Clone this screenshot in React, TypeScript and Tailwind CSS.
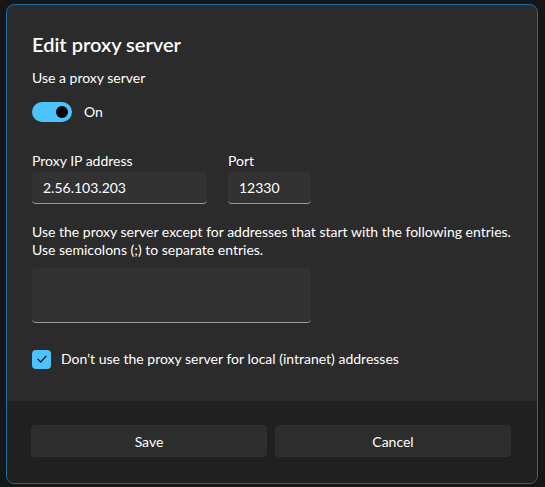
import React from "react";

export default function App() {
  return (
    <div
      className="w-[545px] h-[487px] bg-[#161616] overflow-hidden pt-[4px] pl-[6px]"
      style={{ fontFamily: 'Lato, "Noto Sans", sans-serif' }}
    >
      <div className="w-[532px] h-[480px] rounded-[8px] border border-[#1c6aa6] bg-[#2b2b2b] overflow-hidden flex flex-col">
        <div className="flex-1 pl-[25px] pt-[26px]">
          <div className="text-[20px] leading-[26px] font-semibold text-white">Edit proxy server</div>
          <div className="mt-[11px] text-[14px] leading-[20px] text-white">Use a proxy server</div>
          <div className="mt-[14px] flex items-center gap-[12px]">
            <div className="w-[40px] h-[20px] rounded-full bg-[#4cc2ff] flex items-center justify-end pr-[4px]">
              <div className="w-[12px] h-[12px] rounded-full bg-black" />
            </div>
            <span className="text-[14px] leading-[20px] text-white">On</span>
          </div>
          <div className="mt-[29px] flex gap-[21px]">
            <div className="flex flex-col">
              <span className="text-[14px] leading-[20px] text-white">Proxy IP address</span>
              <div className="mt-[1px] w-[175px] h-[32px] rounded-[4px] bg-[#323232] border-b border-[#9a9a9a] flex items-center pl-[11px] text-[14px] text-white">
                2.56.103.203
              </div>
            </div>
            <div className="flex flex-col">
              <span className="text-[14px] leading-[20px] text-white">Port</span>
              <div className="mt-[1px] w-[83px] h-[32px] rounded-[4px] bg-[#323232] border-b border-[#9a9a9a] flex items-center pl-[11px] text-[14px] text-white">
                12330
              </div>
            </div>
          </div>
          <div className="mt-[19px] text-[14px] leading-[18px] text-white whitespace-nowrap">
            Use the proxy server except for addresses that start with the following entries.
            <br />
            Use semicolons (;) to separate entries.
          </div>
          <div className="mt-[9px] w-[279px] h-[55px] rounded-[4px] bg-[#323232] border-b border-[#9a9a9a]" />
          <div className="mt-[26px] flex items-center gap-[10px]">
            <div className="w-[19px] h-[19px] rounded-[4px] bg-[#4cc2ff] flex items-center justify-center">
              <svg width="12" height="12" viewBox="0 0 12 12" fill="none">
                <path d="M2 6.3 L4.7 9 L10 3.2" stroke="#101010" strokeWidth="1.3" strokeLinecap="round" strokeLinejoin="round" />
              </svg>
            </div>
            <span className="text-[14px] leading-[20px] text-white">Don’t use the proxy server for local (intranet) addresses</span>
          </div>
        </div>
        <div className="h-[82px] bg-[#202020] flex items-start gap-[8px] pl-[24px] pt-[24px]">
          <button className="w-[236px] h-[32px] rounded-[4px] bg-[#2d2d2d] border border-[#303030] text-[14px] text-white">Save</button>
          <button className="w-[236px] h-[32px] rounded-[4px] bg-[#2d2d2d] border border-[#303030] text-[14px] text-white">Cancel</button>
        </div>
      </div>
    </div>
  );
}
